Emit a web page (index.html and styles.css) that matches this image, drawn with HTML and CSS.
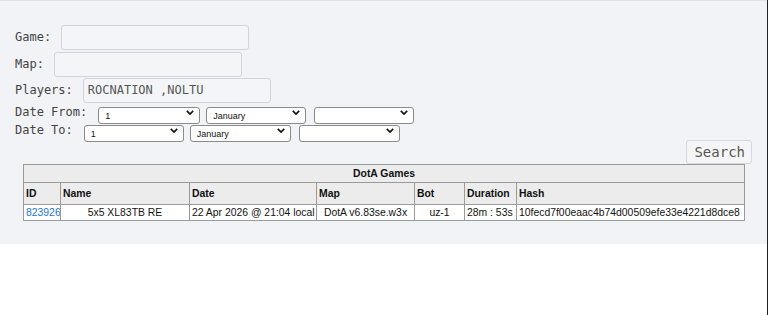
FILE: index.html
```html
<!DOCTYPE html>
<html lang="en">
<head>
  <meta charset="UTF-8" />
  <title>DotA Games</title>
  <link rel="stylesheet" href="styles.css">
</head>
<body>
  <!-- search panel -->
  <div class="panel">
    <form class="search-form">
      <div class="field-row first">
        <label class="field-label">Game:</label>
        <input class="text-input" type="text" />
      </div>
      <div class="field-row">
        <label class="field-label">Map:</label>
        <input class="text-input" type="text" />
      </div>
      <div class="field-row">
        <label class="field-label">Players:</label>
        <input class="text-input" type="text" value="ROCNATION ,NOLTU" />
      </div>

      <div class="date-row">
        <label class="field-label">Date From:</label>
        <span class="select-wrap w102"><select><option>1</option></select><svg class="chev" viewBox="0 0 10 6"><path d="M1 1l4 4 4-4" /></svg></span>
        <span class="select-wrap w100"><select><option>January</option></select><svg class="chev" viewBox="0 0 10 6"><path d="M1 1l4 4 4-4" /></svg></span>
        <span class="select-wrap w100 gap-wide"><select><option></option></select><svg class="chev" viewBox="0 0 10 6"><path d="M1 1l4 4 4-4" /></svg></span>
      </div>
      <div class="date-row">
        <label class="field-label">Date To:</label>
        <span class="select-wrap w100"><select><option>1</option></select><svg class="chev" viewBox="0 0 10 6"><path d="M1 1l4 4 4-4" /></svg></span>
        <span class="select-wrap w101"><select><option>January</option></select><svg class="chev" viewBox="0 0 10 6"><path d="M1 1l4 4 4-4" /></svg></span>
        <span class="select-wrap w101 gap-wide"><select><option></option></select><svg class="chev" viewBox="0 0 10 6"><path d="M1 1l4 4 4-4" /></svg></span>
      </div>

      <div class="search-row">
        <button class="search-button" type="button">Search</button>
      </div>
    </form>

    <!-- results -->
    <table class="games">
      <colgroup>
        <col style="width: 37px" />
        <col style="width: 129px" />
        <col style="width: 127px" />
        <col style="width: 98px" />
        <col style="width: 50px" />
        <col style="width: 52px" />
        <col style="width: 228px" />
      </colgroup>
      <tr class="title-row">
        <th class="title" colspan="7">DotA Games</th>
      </tr>
      <tr class="head-row">
        <th>ID</th>
        <th>Name</th>
        <th>Date</th>
        <th>Map</th>
        <th>Bot</th>
        <th>Duration</th>
        <th>Hash</th>
      </tr>
      <tr class="data-row">
        <td><a href="#">823926</a></td>
        <td class="center">5x5 XL83TB RE</td>
        <td>22 Apr 2026 @ 21:04 local</td>
        <td class="center">DotA v6.83se.w3x</td>
        <td class="center">uz-1</td>
        <td>28m : 53s</td>
        <td>10fecd7f00eaac4b74d00509efe33e4221d8dce8</td>
      </tr>
    </table>
  </div>
</body>
</html>
```

FILE: styles.css
```css
/* page */
html, body {
  margin: 0;
  padding: 0;
}
html {
  background: #fff;
  box-shadow: inset -1px 0 0 #222; /* dark frame edge on the right */
  min-height: 100%;
}
body {
  min-height: 100vh;
  margin-right: 1px;
  font-family: "DejaVu Sans Mono", monospace;
}

/* grey panel */
.panel {
  background: #f2f3f7;
  border-top: 1px solid #e2e3e8;
  height: 244px;
  box-sizing: border-box;
  padding: 22px 14px 0 15px;
}

/* form */
.field-row {
  display: flex;
  align-items: center;
  height: 26px;
}
.field-row.first {
  height: 28px;
}
.field-label {
  font-size: 12px;
  color: #444;
  margin-right: 10px;
}
.text-input {
  width: 188px;
  height: 25px;
  box-sizing: border-box;
  border: 1px solid #d3d4d9;
  border-radius: 3px;
  background: #f4f5f8;
  font-family: "DejaVu Sans Mono", monospace;
  font-size: 12px;
  color: #555;
  padding: 0 4px;
}

.date-row {
  display: flex;
  align-items: center;
  gap: 6px;
  height: 18px;
}
.date-row .field-label {
  margin-right: 5px;
}
.select-wrap {
  position: relative;
  display: inline-block;
  height: 17px;
}
.select-wrap.gap-wide {
  margin-left: 2px;
}
.select-wrap select {
  appearance: none;
  -webkit-appearance: none;
  width: 100%;
  height: 17px;
  box-sizing: border-box;
  border: 1px solid #8a8a8a;
  border-radius: 3px;
  background: #fff;
  font-family: "Liberation Sans", Arial, sans-serif;
  font-size: 9px;
  color: #111;
  padding: 0 6px;
}
.chev {
  position: absolute;
  right: 6px;
  top: 6px;
  width: 8px;
  height: 5px;
  fill: none;
  stroke: #111;
  stroke-width: 2;
  pointer-events: none;
}
.w100 { width: 100px; }
.w101 { width: 101px; }
.w102 { width: 102px; }

.search-row {
  display: flex;
  justify-content: flex-end;
  margin-top: 1px;
  padding-right: 1px;
}
.search-button {
  font-family: "DejaVu Sans Mono", monospace;
  font-size: 14px;
  color: #555;
  background: #f5f5f7;
  border: 1px solid #d8d8dc;
  border-radius: 3px;
  height: 24px;
  padding: 0 6px 0 7px;
}

/* results table */
.games {
  border-collapse: collapse;
  table-layout: fixed;
  margin-left: 8px;
  width: 721px;
  font-family: "Liberation Sans", Arial, sans-serif;
  font-size: 10.4px;
  color: #111;
}
.games th,
.games td {
  border: 1px solid #9a9a9a;
  padding: 0 2px;
  white-space: nowrap;
  overflow: hidden;
}
.games th {
  background: #ececec;
  text-align: left;
}
.title-row th {
  text-align: center;
  height: 17px;
}
.head-row th {
  height: 21px;
}
.games td {
  background: #fff;
  height: 15px;
}
.games td.center {
  text-align: center;
}
.games a {
  color: #1a73d9;
  text-decoration: none;
}
```
